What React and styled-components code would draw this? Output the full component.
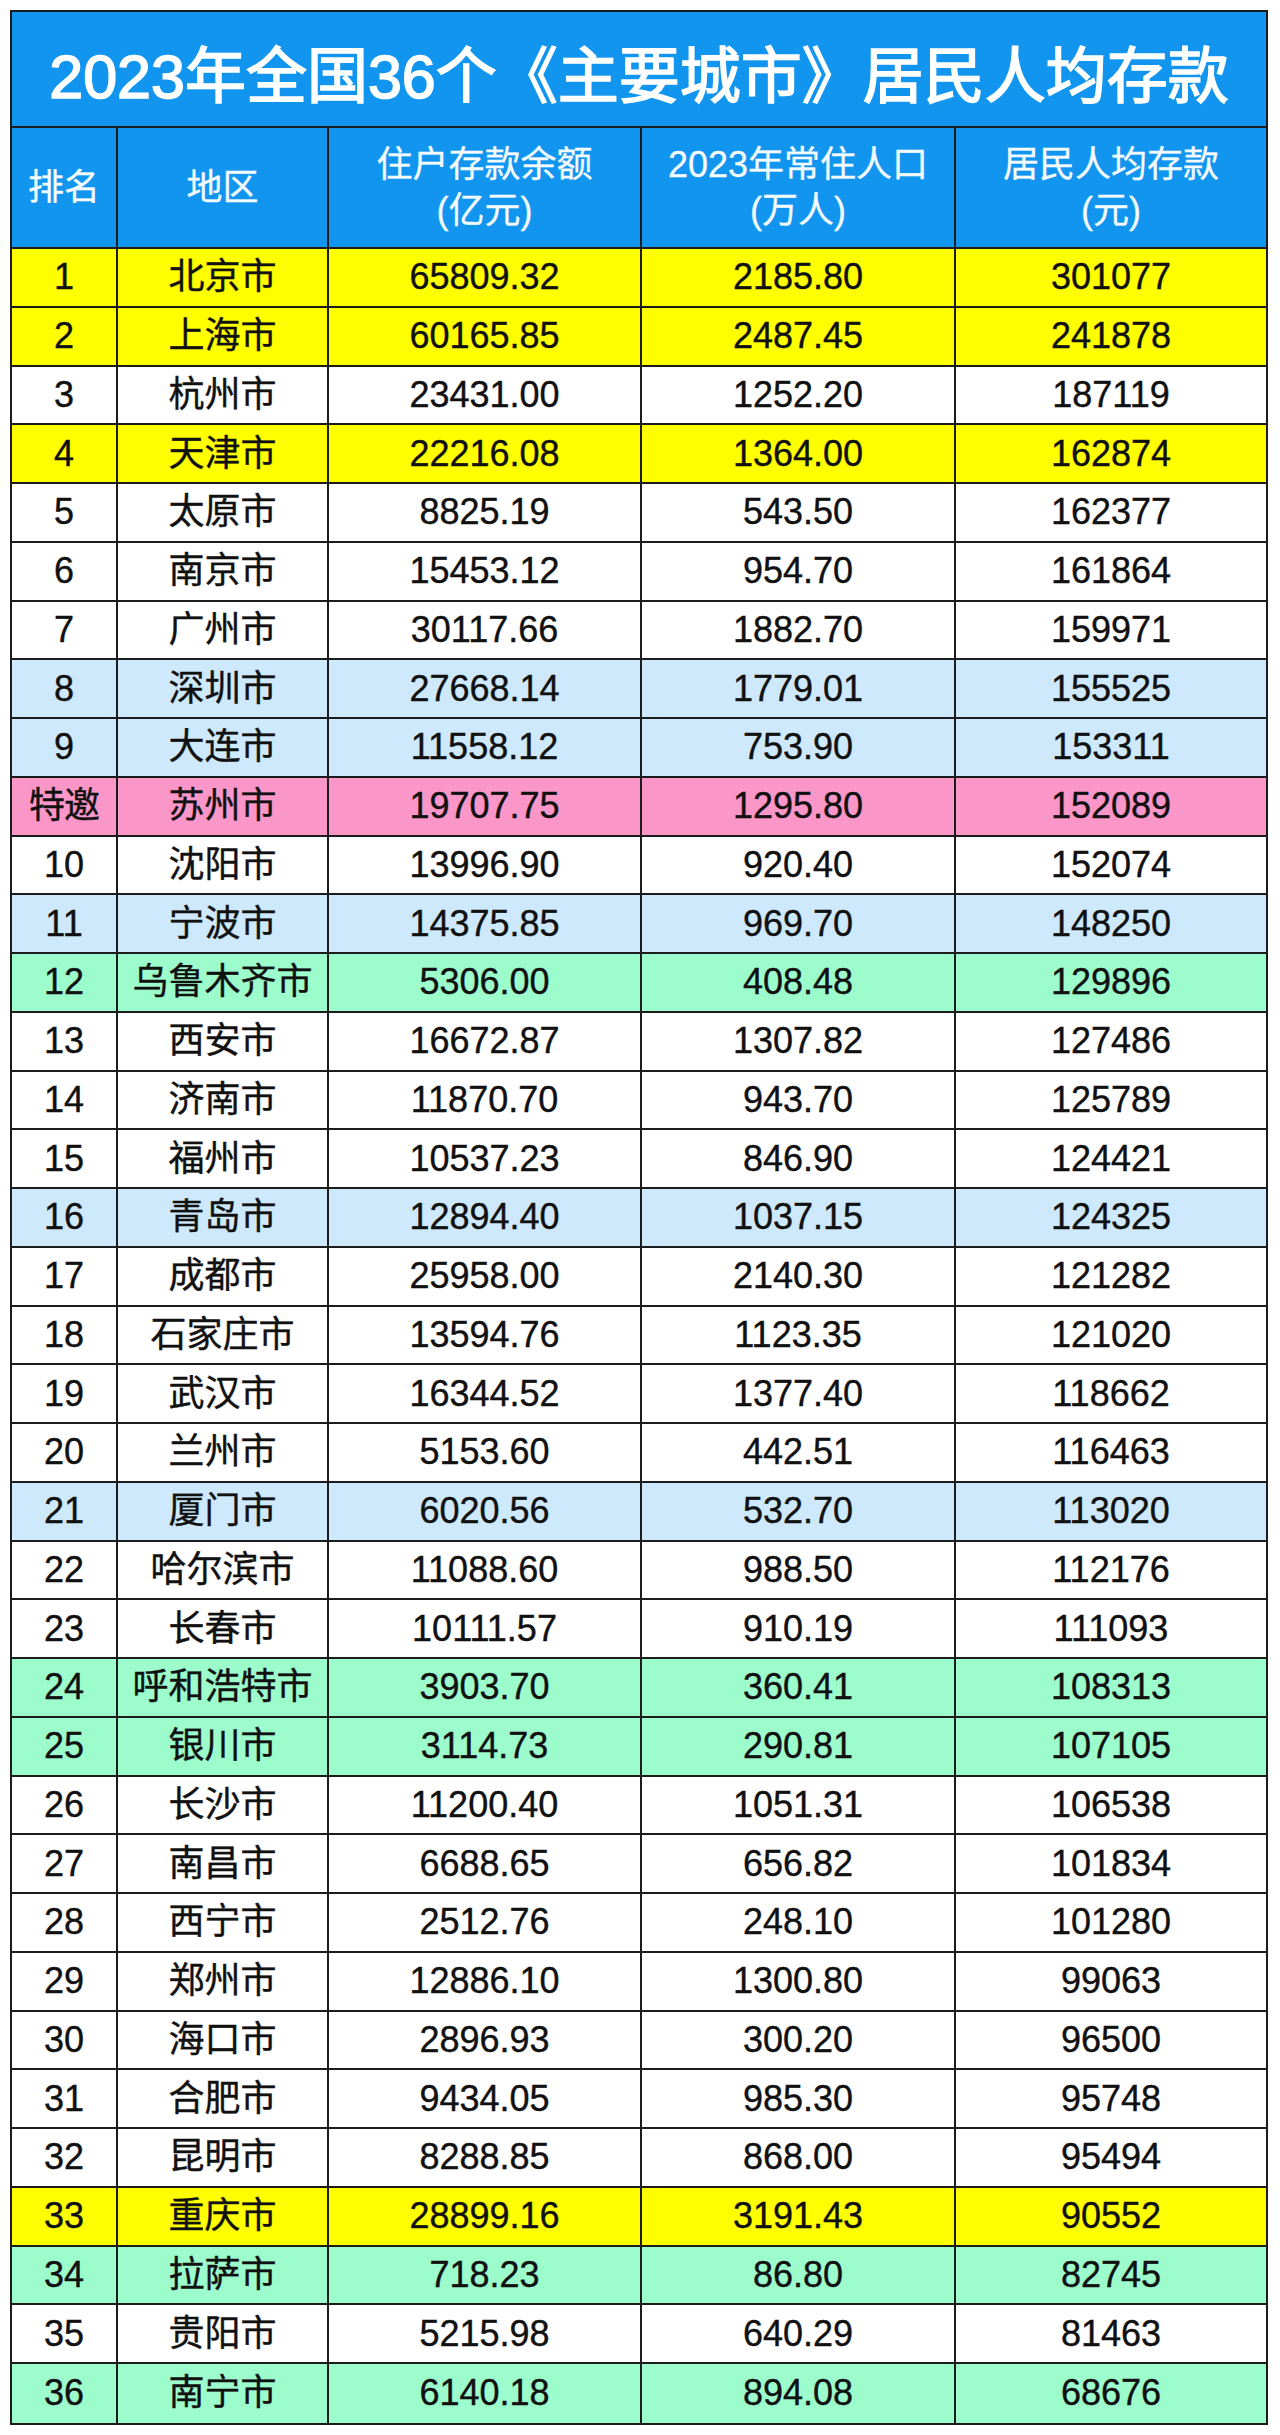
import React from 'react';
import styled, { createGlobalStyle } from 'styled-components';

const GlobalStyle = createGlobalStyle`
  html, body {
    margin: 0;
    padding: 0;
    background: #ffffff;
  }
  body {
    font-family: 'Liberation Sans', 'Noto Sans CJK SC', sans-serif;
  }
`;

const FILLS = {
  yellow: '#ffff00',
  blue: '#cde9fb',
  pink: '#fa96c8',
  green: '#9cfccc',
  white: '#ffffff'
};

const ROWS = [
  ['1', '北京市', '65809.32', '2185.80', '301077', 'yellow'],
  ['2', '上海市', '60165.85', '2487.45', '241878', 'yellow'],
  ['3', '杭州市', '23431.00', '1252.20', '187119', 'white'],
  ['4', '天津市', '22216.08', '1364.00', '162874', 'yellow'],
  ['5', '太原市', '8825.19', '543.50', '162377', 'white'],
  ['6', '南京市', '15453.12', '954.70', '161864', 'white'],
  ['7', '广州市', '30117.66', '1882.70', '159971', 'white'],
  ['8', '深圳市', '27668.14', '1779.01', '155525', 'blue'],
  ['9', '大连市', '11558.12', '753.90', '153311', 'blue'],
  ['特邀', '苏州市', '19707.75', '1295.80', '152089', 'pink'],
  ['10', '沈阳市', '13996.90', '920.40', '152074', 'white'],
  ['11', '宁波市', '14375.85', '969.70', '148250', 'blue'],
  ['12', '乌鲁木齐市', '5306.00', '408.48', '129896', 'green'],
  ['13', '西安市', '16672.87', '1307.82', '127486', 'white'],
  ['14', '济南市', '11870.70', '943.70', '125789', 'white'],
  ['15', '福州市', '10537.23', '846.90', '124421', 'white'],
  ['16', '青岛市', '12894.40', '1037.15', '124325', 'blue'],
  ['17', '成都市', '25958.00', '2140.30', '121282', 'white'],
  ['18', '石家庄市', '13594.76', '1123.35', '121020', 'white'],
  ['19', '武汉市', '16344.52', '1377.40', '118662', 'white'],
  ['20', '兰州市', '5153.60', '442.51', '116463', 'white'],
  ['21', '厦门市', '6020.56', '532.70', '113020', 'blue'],
  ['22', '哈尔滨市', '11088.60', '988.50', '112176', 'white'],
  ['23', '长春市', '10111.57', '910.19', '111093', 'white'],
  ['24', '呼和浩特市', '3903.70', '360.41', '108313', 'green'],
  ['25', '银川市', '3114.73', '290.81', '107105', 'green'],
  ['26', '长沙市', '11200.40', '1051.31', '106538', 'white'],
  ['27', '南昌市', '6688.65', '656.82', '101834', 'white'],
  ['28', '西宁市', '2512.76', '248.10', '101280', 'white'],
  ['29', '郑州市', '12886.10', '1300.80', '99063', 'white'],
  ['30', '海口市', '2896.93', '300.20', '96500', 'white'],
  ['31', '合肥市', '9434.05', '985.30', '95748', 'white'],
  ['32', '昆明市', '8288.85', '868.00', '95494', 'white'],
  ['33', '重庆市', '28899.16', '3191.43', '90552', 'yellow'],
  ['34', '拉萨市', '718.23', '86.80', '82745', 'green'],
  ['35', '贵阳市', '5215.98', '640.29', '81463', 'white'],
  ['36', '南宁市', '6140.18', '894.08', '68676', 'green']
];

const HEADERS = [
  ['排名'],
  ['地区'],
  ['住户存款余额', '(亿元)'],
  ['2023年常住人口', '(万人)'],
  ['居民人均存款', '(元)']
];

const Page = styled.div`
  padding: 10px 12px 12px 10px;
`;

const Table = styled.div`
  width: 1258px;
  border: 2px solid #1c1c1c;
  box-sizing: border-box;
`;

const Title = styled.div`
  height: 116px;
  display: flex;
  align-items: center;
  justify-content: center;
  background: #1195ee;
  color: #ffffff;
  font-size: 61px;
  font-weight: 400;
  -webkit-text-stroke: 1.6px #ffffff;
  border-bottom: 2px solid #1c1c1c;
  padding-top: 4px;
  box-sizing: border-box;
`;

const Row = styled.div`
  display: grid;
  grid-template-columns: 106px 211px 313px 314px 1fr;
  height: ${p => (p.header ? '121px' : '58.75px')};
  background: ${p => (p.header ? '#1195ee' : FILLS[p.fill])};
  border-bottom: 2px solid #1c1c1c;
  box-sizing: border-box;

  &:last-child {
    border-bottom: none;
  }
`;

const Cell = styled.div`
  display: flex;
  flex-direction: column;
  align-items: center;
  justify-content: center;
  border-right: 2px solid #1c1c1c;
  color: ${p => (p.header ? '#f4fbff' : '#111111')};
  font-size: 36px;
  line-height: ${p => (p.header ? '46px' : '1')};
  white-space: nowrap;
  letter-spacing: ${p => (p.narrow ? '-1px' : '0')};
  -webkit-text-stroke: ${p => (p.header ? '0.3px #f4fbff' : '0.4px #111111')};

  &:last-child {
    border-right: none;
  }
`;

export default function App() {
  return (
    <Page>
      <GlobalStyle />
      <Table>
        <Title>2023年全国36个《主要城市》居民人均存款</Title>
        <Row header>
          {HEADERS.map((lines, i) => (
            <Cell header key={i}>
              {lines.map(line => (
                <span key={line}>{line}</span>
              ))}
            </Cell>
          ))}
        </Row>
        {ROWS.map(([rank, city, deposit, people, avg, fill]) => (
          <Row fill={fill} key={rank}>
            <Cell narrow={rank === '特邀'}>{rank}</Cell>
            <Cell>{city}</Cell>
            <Cell>{deposit}</Cell>
            <Cell>{people}</Cell>
            <Cell>{avg}</Cell>
          </Row>
        ))}
      </Table>
    </Page>
  );
}
